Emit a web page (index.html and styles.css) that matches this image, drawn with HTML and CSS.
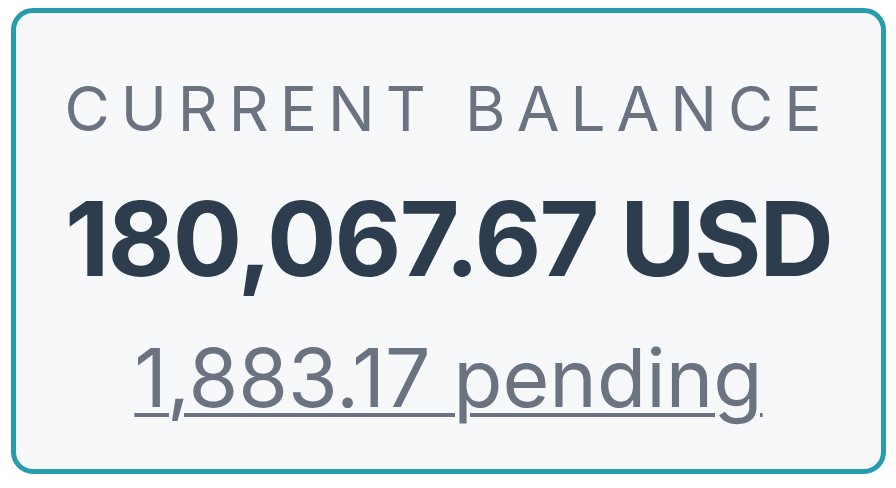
FILE: index.html
```html
<!DOCTYPE html>
<html lang="en">
<head>
<meta charset="utf-8">
<title>Current Balance</title>
<link rel="stylesheet" href="styles.css">
</head>
<body>
<div class="card">
  <div class="label">CURRENT BALANCE</div>
  <div class="amount">180,067.67 USD</div>
  <a class="pending" href="#">1,883.17 pending</a>
</div>
</body>
</html>
```
FILE: styles.css
```css
html, body {
  margin: 0;
  padding: 0;
  background: #ffffff;
}
body {
  padding: 8px 10px 14px 11px;
  font-family: Inter, "Noto Sans", sans-serif;
}
.card {
  box-sizing: border-box;
  width: 875px;
  height: 466px;
  border: 5px solid #269cad;
  border-radius: 22px;
  background: #f7f8fa;
  display: flex;
  flex-direction: column;
  align-items: center;
  padding-top: 65px;
}
.label {
  font-size: 62px;
  line-height: 62px;
  letter-spacing: 11px;
  color: #6b7280;
  font-weight: 400;
}
.amount {
  margin-top: 47px;
  font-size: 103px;
  line-height: 103px;
  font-weight: 700;
  color: #2d3d4e;
  letter-spacing: -1.8px;
}
.pending {
  margin-top: 47px;
  font-size: 80.5px;
  line-height: 82px;
  color: #6b7280;
  text-decoration: underline;
  text-decoration-thickness: 4px;
  text-underline-offset: 6px;
}
```
